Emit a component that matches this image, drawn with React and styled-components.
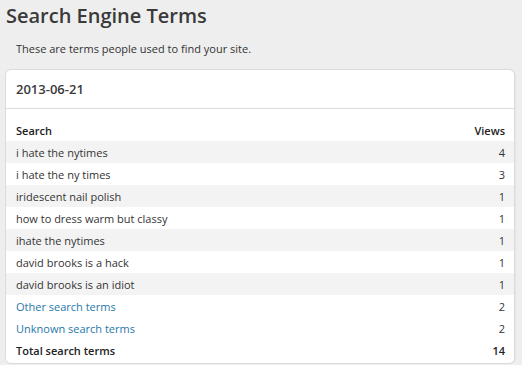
import React from "react";
import styled, { createGlobalStyle } from "styled-components";

const Global = createGlobalStyle`
  html, body { margin: 0; padding: 0; background: #eeeeee; }
  body { font-family: "Open Sans", "Noto Sans", sans-serif; color: #333; overflow: hidden; }
`;

const Page = styled.div`
  padding: 3px 7px 0 5px;
`;

const Title = styled.h1`
  margin: 0 0 0 1px;
  font-size: 20px;
  font-weight: 600;
  line-height: 26px;
  color: #3a3a3a;
`;

const Intro = styled.p`
  margin: 12px 0 0 11px;
  font-size: 11px;
  line-height: 15px;
  color: #333;
`;

const Card = styled.section`
  margin-top: 13px;
  background: #fff;
  border: 1px solid #dcdcdc;
  border-radius: 6px;
  box-shadow: 1px 0 1px rgba(0,0,0,0.04);
  overflow: hidden;
`;

const CardHeader = styled.h2`
  margin: 0;
  padding: 0 10px;
  height: 38px;
  display: flex;
  align-items: center;
  font-size: 13px;
  font-weight: 600;
  color: #3a3a3a;
  border-bottom: 1px solid #dcdcdc;
`;

const Table = styled.div`
  padding-top: 10px;
  padding-bottom: 2px;
`;

const Row = styled.div`
  display: flex;
  justify-content: space-between;
  align-items: center;
  height: 22px;
  padding: 0 9px 0 10px;
  font-size: 11px;
  background: ${(p) => (p.$striped ? "#f3f3f3" : "#fff")};
  font-weight: ${(p) => (p.$bold ? 600 : 400)};
  color: ${(p) => (p.$bold ? "#222" : "#333")};
`;

const Cell = styled.span`
  color: inherit;
`;

const Link = styled.a`
  color: #1f78a8;
  text-decoration: none;
`;

const rows = [
  ["i hate the nytimes", 4],
  ["i hate the ny times", 3],
  ["iridescent nail polish", 1],
  ["how to dress warm but classy", 1],
  ["ihate the nytimes", 1],
  ["david brooks is a hack", 1],
  ["david brooks is an idiot", 1],
];

export default function App() {
  return (
    <Page>
      <Global />
      <Title>Search Engine Terms</Title>
      <Intro>These are terms people used to find your site.</Intro>
      <Card>
        <CardHeader>2013-06-21</CardHeader>
        <Table>
          <Row $bold>
            <Cell>Search</Cell>
            <Cell>Views</Cell>
          </Row>
          {rows.map(([t, v], i) => (
            <Row key={t} $striped={i % 2 === 0}>
              <Cell>{t}</Cell>
              <Cell>{v}</Cell>
            </Row>
          ))}
          <Row>
            <Link href="#">Other search terms</Link>
            <Cell>2</Cell>
          </Row>
          <Row>
            <Link href="#">Unknown search terms</Link>
            <Cell>2</Cell>
          </Row>
          <Row $bold>
            <Cell>Total search terms</Cell>
            <Cell>14</Cell>
          </Row>
        </Table>
      </Card>
    </Page>
  );
}
